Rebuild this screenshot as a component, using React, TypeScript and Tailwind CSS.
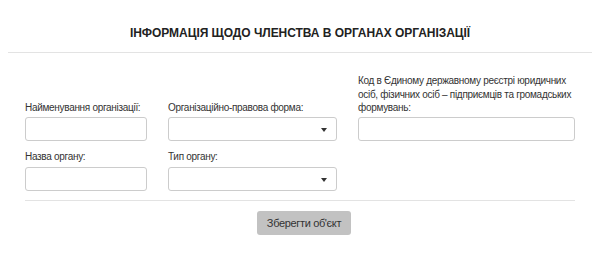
function Field({ label, select, w, gap = "mb-[2px]" }: { label: string; select?: boolean; w: string; gap?: string }) {
  return (
    <div className={`flex flex-col ${w}`}>
      <label className={`leading-[13.5px] ${gap}`}>{label}</label>
      <div className="relative flex h-[24px] items-center rounded-[3px] border border-[#cccccc] bg-white">
        {select && (
          <span className="absolute right-[9px] top-[10px] h-0 w-0 border-x-[3.5px] border-t-[4px] border-x-transparent border-t-[#333]" />
        )}
      </div>
    </div>
  );
}

export default function App() {
  return (
    <main className="min-h-screen bg-white px-[8px] font-['Liberation_Sans',Arial,sans-serif] text-[10px] tracking-[-0.3px] text-[#333]">
      <h1 className="pt-[25px] pb-[11px] text-center text-[12px] font-bold leading-[16px] tracking-[-0.05px] text-[#222]">
        ІНФОРМАЦІЯ ЩОДО ЧЛЕНСТВА В ОРГАНАХ ОРГАНІЗАЦІЇ
      </h1>
      <hr className="border-[#e3e3e3]" />
      <form className="px-[17px] pt-[21px]">
        <div className="flex items-end gap-[21px]">
          <Field w="w-[122px]" label="Найменування організації:" />
          <Field w="w-[169px]" label="Організаційно-правова форма:" select />
          <Field
            w="w-[217px]"
            label="Код в Єдиному державному реєстрі юридичних осіб, фізичних осіб – підприємців та громадських формувань:"
          />
        </div>
        <div className="mt-[9px] flex items-end gap-[21px]">
          <Field w="w-[122px]" label="Назва органу:" gap="mb-[4px]" />
          <Field w="w-[169px]" label="Тип органу:" select gap="mb-[4px]" />
        </div>
        <hr className="mt-[9px] border-[#e3e3e3]" />
        <div className="flex justify-center pt-[10px]">
          <button
            type="button"
            className="ml-[8px] h-[24px] w-[94px] rounded-[3px] bg-[#c2c2c2] text-[11px] tracking-[-0.35px] text-[#333]"
          >
            Зберегти об'єкт
          </button>
        </div>
      </form>
    </main>
  );
}
